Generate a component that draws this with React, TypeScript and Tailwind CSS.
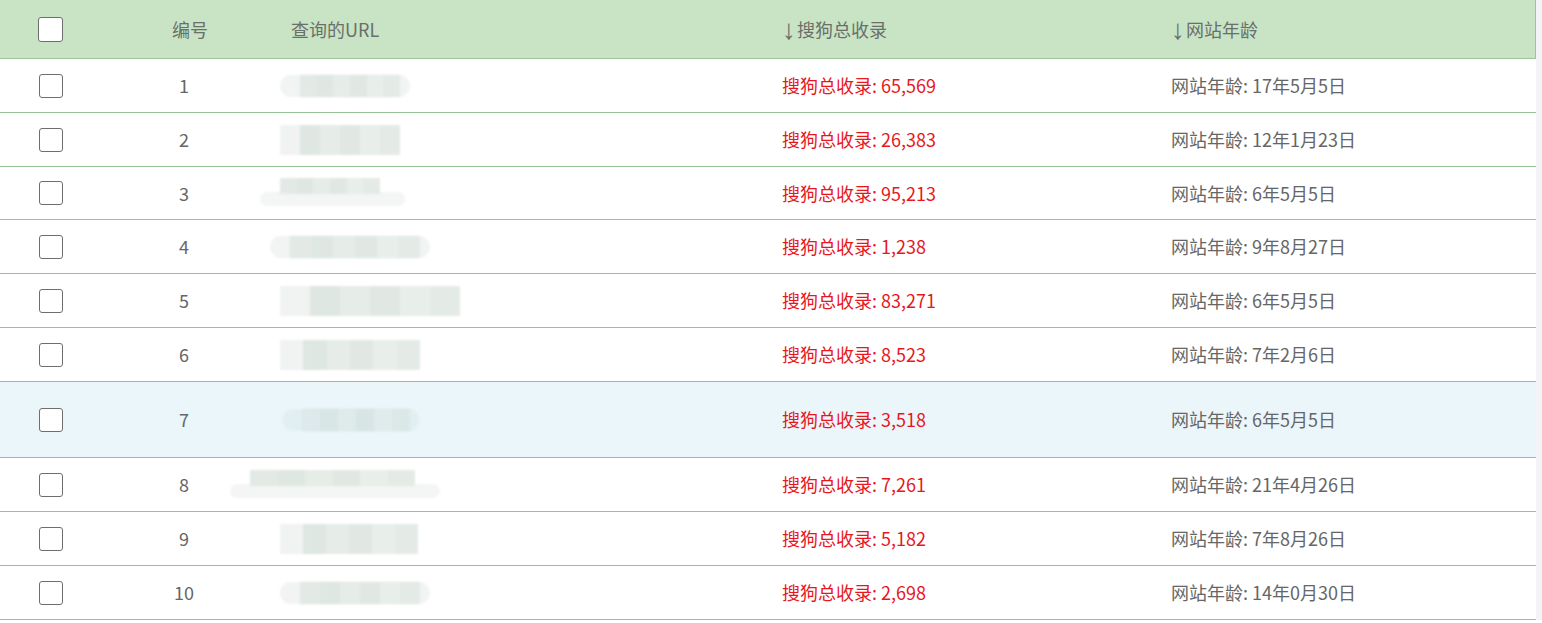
import React from "react";

type Row = { n: number; count: string; age: string; blur: { l: number; w: number; shape?: number } };

const rows: Row[] = [
  { n: 1, count: "65,569", age: "17年5月5日", blur: { l: 0, w: 130, shape: 0 } },
  { n: 2, count: "26,383", age: "12年1月23日", blur: { l: 0, w: 120, shape: 1 } },
  { n: 3, count: "95,213", age: "6年5月5日", blur: { l: -20, w: 145, shape: 2 } },
  { n: 4, count: "1,238", age: "9年8月27日", blur: { l: -10, w: 160, shape: 0 } },
  { n: 5, count: "83,271", age: "6年5月5日", blur: { l: 0, w: 180, shape: 1 } },
  { n: 6, count: "8,523", age: "7年2月6日", blur: { l: 0, w: 140, shape: 1 } },
  { n: 7, count: "3,518", age: "6年5月5日", blur: { l: 2, w: 138, shape: 0 } },
  { n: 8, count: "7,261", age: "21年4月26日", blur: { l: -50, w: 210, shape: 2 } },
  { n: 9, count: "5,182", age: "7年8月26日", blur: { l: 0, w: 138, shape: 1 } },
  { n: 10, count: "2,698", age: "14年0月30日", blur: { l: 0, w: 150, shape: 0 } },
];

const font = { fontFamily: '"Noto Sans CJK SC", "Noto Sans", sans-serif' };

function Checkbox() {
  return <div className="h-[24px] w-[24px] rounded-[3px] border-[1.5px] border-[#6e6e6e] bg-white" />;
}

function Blur({ l, w, shape, hl }: { l: number; w: number; shape?: number; hl?: boolean }) {
  const segs = hl
    ? ["#dde9ea", "#d9e6e6", "#dfeaeb", "#d8e5e5", "#e0ebec", "#dbe8e8"]
    : ["#e3eae5", "#dfe7e2", "#e6ece8", "#e1e8e3", "#e8eeea", "#e4ebe6"];
  return (
    <div className="relative h-[30px]" style={{ marginLeft: l, width: w }}>
      {shape === 0 && (
        <div
          className={
            "absolute inset-x-0 top-[4px] h-[22px] rounded-full blur-[1px] " +
            (hl ? "bg-[#e2eff2]" : "bg-[#f1f4f2]")
          }
        />
      )}
      {shape === 2 && (
        <div className="absolute inset-x-0 top-[14px] h-[14px] rounded-full bg-[#f3f6f4] blur-[1px]" />
      )}
      <div
        className={
          shape === 1
            ? "absolute left-[0px] right-[0px] top-[0px] flex h-[30px] blur-[1px]"
            : shape === 2
            ? "absolute left-[20px] right-[25px] top-[0px] flex h-[16px] blur-[1px]"
            : "absolute left-[20px] right-[10px] top-[4px] flex h-[22px] blur-[1px]"
        }
      >
        {segs.map((c, i) => (
          <div key={i} className="h-full flex-1" style={{ background: shape === 1 && i === 0 ? "#f0f3f1" : c }} />
        ))}
      </div>
    </div>
  );
}

function Arrow() {
  return (
    <span
      className="mr-[1px] inline-block align-[-2px] text-[28px] leading-[0]"
      style={{ fontFamily: '"Liberation Sans", sans-serif' }}
    >
      ↓
    </span>
  );
}

export default function App() {
  return (
    <div className="flex w-[1542px] bg-[#f3f4f6]" style={font}>
      <div className="w-[1536px] bg-white">
        <div className="flex h-[59px] items-center border-b border-r border-[#9cc49a] bg-[#c8e4c5] text-[18px] text-[#6a6f6a]">
          <div className="flex w-[110px] shrink-0 pl-[38px]">
            <div className="h-[25px] w-[25px] rounded-[3px] border-[1.5px] border-[#6e6e6e] bg-white" />
          </div>
          <div className="w-[160px] shrink-0 text-center">编号</div>
          <div className="w-[500px] shrink-0 pl-[21px]">查询的URL</div>
          <div className="w-[389px] shrink-0 pl-[12px]">
            <Arrow />搜狗总收录
          </div>
          <div className="flex-1 pl-[12px]">
            <Arrow />网站年龄
          </div>
        </div>
        {rows.map((r) => (
          <div
            key={r.n}
            className={
              "flex items-center border-b border-[#95c291] text-[18px] " +
              (r.n === 7 ? "h-[76px] bg-[#ebf6fb]" : r.n === 3 ? "h-[53px] bg-white" : "h-[54px] bg-white")
            }
          >
            <div className="flex w-[110px] shrink-0 pl-[39px]">
              <Checkbox />
            </div>
            <div className="w-[160px] shrink-0 pr-[12px] text-center text-[#666]">{r.n}</div>
            <div className="w-[500px] shrink-0 pl-[10px]">
              <Blur l={r.blur.l} w={r.blur.w} shape={r.blur.shape} hl={r.n === 7} />
            </div>
            <div className="w-[389px] shrink-0 pl-[12px] text-[#e8171d]">搜狗总收录: {r.count}</div>
            <div className="flex-1 pl-[12px] text-[#666]">网站年龄: {r.age}</div>
          </div>
        ))}
      </div>
    </div>
  );
}
